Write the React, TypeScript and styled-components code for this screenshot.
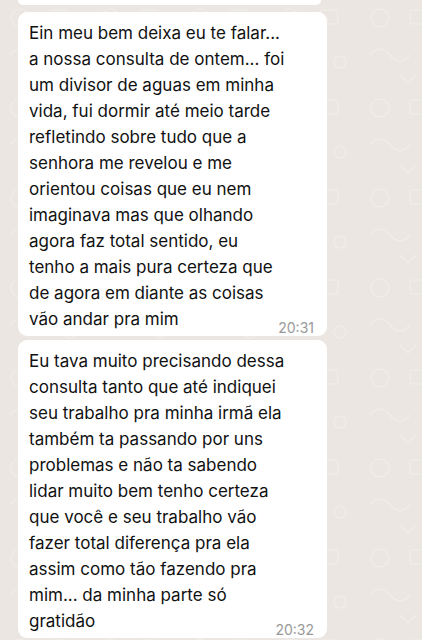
import React from 'react';
import styled, { createGlobalStyle } from 'styled-components';

const GlobalStyle = createGlobalStyle`
  html, body {
    margin: 0;
    padding: 0;
    background: #ebe6e1;
    overflow: hidden;
  }
  * { box-sizing: border-box; }
`;

const Screen = styled.div`
  position: relative;
  width: 422px;
  height: 640px;
  overflow: hidden;
  background: #ebe6e1;
`;

const Wallpaper = styled.svg`
  position: absolute;
  inset: 0;
  width: 100%;
  height: 100%;
`;

const Chat = styled.div`
  position: relative;
  display: flex;
  flex-direction: column;
  gap: 4px;
  padding: 0 0 0 18px;
`;

const Stub = styled.div`
  width: 303px;
  height: 5px;
  margin-bottom: 3px;
  background: #ffffff;
  border-radius: 0 0 9px 9px;
`;

const Bubble = styled.div`
  width: 309px;
  background: #ffffff;
  border-radius: 9px;
  padding: 8px 13px 4px 11px;
  font-family: Inter, "Liberation Sans", sans-serif;
`;

const Text = styled.p`
  margin: 0;
  font-size: 17px;
  line-height: 26px;
  color: #111111;
  white-space: pre-line;
`;

const Footer = styled.div`
  display: flex;
  justify-content: space-between;
  align-items: flex-start;
`;

const LastLine = styled.span`
  font-size: 17px;
  line-height: 26px;
  color: #111111;
`;

const Time = styled.span`
  margin: 13px 0 -7px 8px;
  font-size: 14px;
  line-height: 18px;
  color: #999999;
`;

const messages = [
  {
    lines: [
      'Ein meu bem deixa eu te falar...',
      'a nossa consulta de ontem... foi',
      'um divisor de aguas em minha',
      'vida, fui dormir até meio tarde',
      'refletindo sobre tudo que a',
      'senhora me revelou e me',
      'orientou coisas que eu nem',
      'imaginava mas que olhando',
      'agora faz total sentido, eu',
      'tenho a mais pura certeza que',
      'de agora em diante as coisas',
      'vão andar pra mim',
    ],
    time: '20:31',
  },
  {
    lines: [
      'Eu tava muito precisando dessa',
      'consulta tanto que até indiquei',
      'seu trabalho pra minha irmã ela',
      'também ta passando por uns',
      'problemas e não ta sabendo',
      'lidar muito bem tenho certeza',
      'que você e seu trabalho vão',
      'fazer total diferença pra ela',
      'assim como tão fazendo pra',
      'mim... da minha parte só',
      'gratidão',
    ],
    time: '20:32',
  },
];

const App: React.FC = () => {
  return (
    <Screen>
      <GlobalStyle />
      <Wallpaper aria-hidden>
        <defs>
          <pattern id="doodle" width="90" height="90" patternUnits="userSpaceOnUse">
            <g fill="none" stroke="#f1ede9" strokeWidth="1.2">
              <circle cx="20" cy="18" r="9" />
              <rect x="50" y="10" width="18" height="14" rx="3" />
              <path d="M10 55 q10 -12 20 0 t20 0" />
              <circle cx="70" cy="62" r="6" />
              <path d="M40 75 l8 8 l8 -8" />
            </g>
          </pattern>
        </defs>
        <rect width="100%" height="100%" fill="url(#doodle)" />
      </Wallpaper>
      <Chat>
        <Stub />
        {messages.map((m) => (
          <Bubble key={m.time}>
            <Text>{m.lines.slice(0, -1).join('\n')}</Text>
            <Footer>
              <LastLine>{m.lines[m.lines.length - 1]}</LastLine>
              <Time>{m.time}</Time>
            </Footer>
          </Bubble>
        ))}
      </Chat>
    </Screen>
  );
};

export default App;
